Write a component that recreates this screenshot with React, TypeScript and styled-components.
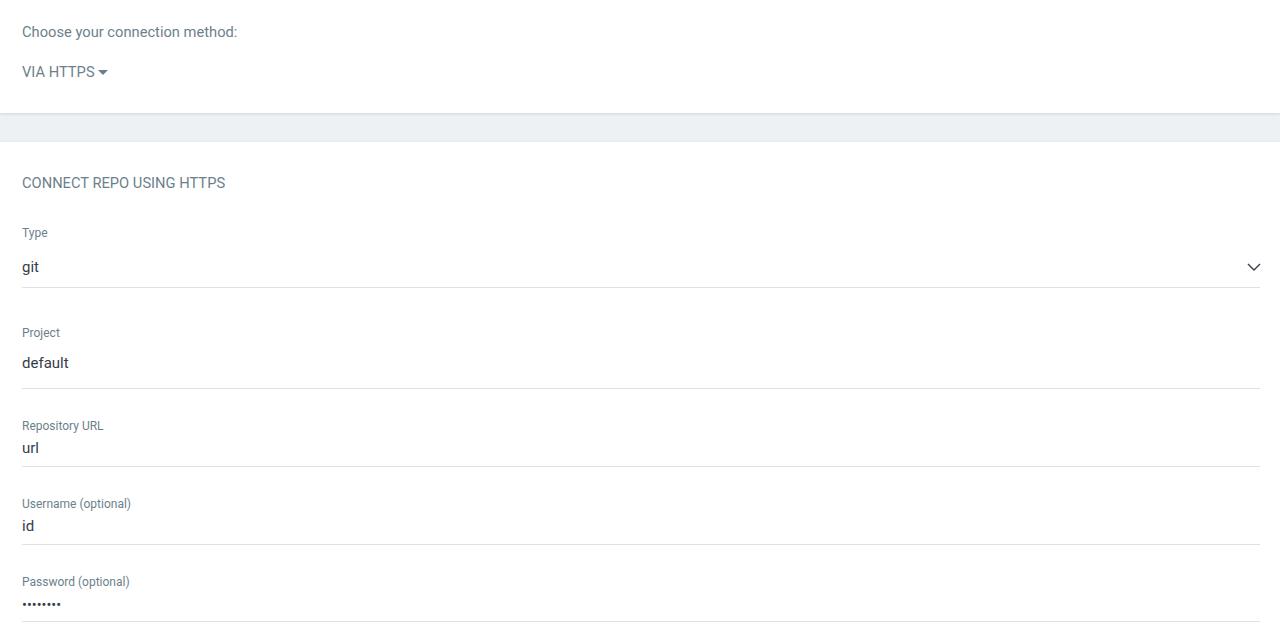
import React from "react";
import styled, { createGlobalStyle } from "styled-components";

const Global = createGlobalStyle`
  html, body { margin: 0; padding: 0; background: #eef1f4; }
  body { font-family: Roboto, "Noto Sans", Arial, sans-serif; -webkit-font-smoothing: antialiased; }
  * { box-sizing: border-box; }
`;

const Page = styled.div`
  display: flex;
  flex-direction: column;
  gap: 29px;
  min-height: 636px;
`;

const Panel = styled.section<{ $pt: number; $pb: number }>`
  background: #fff;
  padding: ${(p) => p.$pt}px 20px ${(p) => p.$pb}px 22px;
  box-shadow: 0 1px 3px rgba(0, 0, 0, 0.12);
  display: flex;
  flex-direction: column;
`;

const Muted = styled.div<{ $mt?: number }>`
  font-size: 14.7px;
  line-height: 20px;
  color: #6d7f8b;
  margin-top: ${(p) => p.$mt ?? 0}px;
`;

const Dropdown = styled.div`
  display: flex;
  align-items: center;
  gap: 3px;
  font-size: 14.7px;
  line-height: 20px;
  color: #6d7f8b;
  margin-top: 20px;
  cursor: pointer;
`;

const Caret = styled.span`
  width: 0;
  height: 0;
  border-left: 5px solid transparent;
  border-right: 5px solid transparent;
  border-top: 5px solid #6d7f8b;
  margin-top: 1px;
`;

const Field = styled.div<{ $mt: number }>`
  display: flex;
  flex-direction: column;
  margin-top: ${(p) => p.$mt}px;
`;

const Label = styled.label`
  font-size: 12px;
  line-height: 14px;
  color: #6d7f8b;
`;

const Value = styled.div<{ $gap: number; $pb: number }>`
  display: flex;
  align-items: center;
  justify-content: space-between;
  height: ${(p) => 18 + p.$pb + 1}px;
  margin-top: ${(p) => p.$gap}px;
  padding-bottom: ${(p) => p.$pb}px;
  border-bottom: 1px solid #dce3e8;
  font-size: 15px;
  line-height: 18px;
  color: #363c4a;
`;

const Dots = styled.span`
  font-size: 14.5px;
  line-height: 18px;
  transform: translateY(2px);
`;

const Chevron = () => (
  <svg width="14" height="8" viewBox="0 0 14 8" fill="none" style={{ marginRight: -1 }}>
    <polyline points="1,1 7,7 13,1" stroke="#363c4a" strokeWidth="1.4" fill="none" />
  </svg>
);

export default function App() {
  return (
    <>
      <Global />
      <Page>
        <Panel $pt={22} $pb={31}>
          <Muted>Choose your connection method:</Muted>
          <Dropdown>
            VIA HTTPS <Caret />
          </Dropdown>
        </Panel>
        <Panel $pt={31} $pb={20}>
          <Muted>CONNECT REPO USING HTTPS</Muted>
          <Field $mt={33}>
            <Label>Type</Label>
            <Value $gap={18} $pb={11}>
              <span>git</span>
              <Chevron />
            </Value>
          </Field>
          <Field $mt={38}>
            <Label>Project</Label>
            <Value $gap={14} $pb={16}>
              <span>default</span>
            </Value>
          </Field>
          <Field $mt={30}>
            <Label>Repository URL</Label>
            <Value $gap={6} $pb={9}>
              <span>url</span>
            </Value>
          </Field>
          <Field $mt={30}>
            <Label>Username (optional)</Label>
            <Value $gap={6} $pb={9}>
              <span>id</span>
            </Value>
          </Field>
          <Field $mt={30}>
            <Label>Password (optional)</Label>
            <Value $gap={6} $pb={8}>
              <Dots>••••••••</Dots>
            </Value>
          </Field>
        </Panel>
      </Page>
    </>
  );
}
